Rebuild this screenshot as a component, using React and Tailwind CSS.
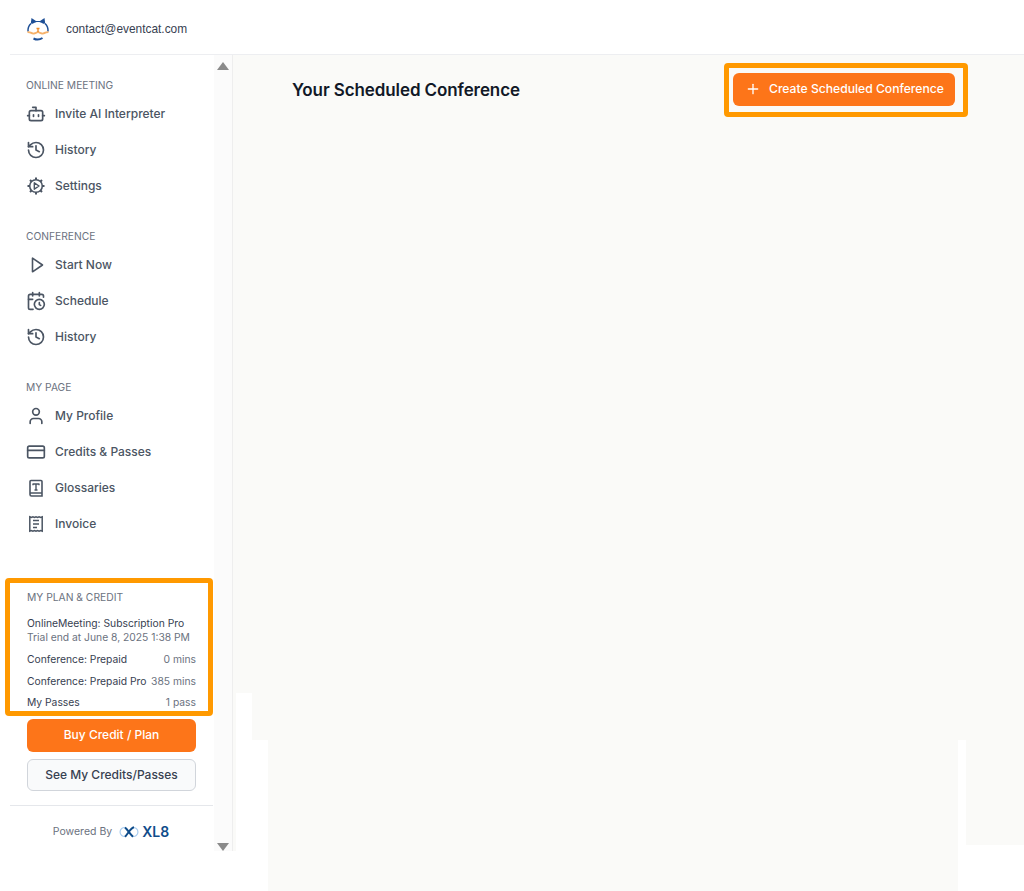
import React from 'react';
import { Bot, History, CalendarClock, User, CreditCard, Plus } from 'lucide-react';

const GearPlayIcon = ({ className }) => (
    <svg viewBox="0 0 20 20" fill="none" stroke="currentColor" strokeWidth="1.600" className={className}>
        <circle cx="10" cy="10" r="6.300" />
        <path d="M10 1.500v2.200M10 16.300v2.200M1.500 10h2.200M16.300 10h2.200M4 4l1.500 1.500M14.500 14.500 16 16M16 4l-1.500 1.500M5.500 14.500 4 16" strokeWidth="2" />
        <path d="M8.300 6.800v6.400l4.700-3.200z" strokeWidth="1.400" strokeLinejoin="round" />
    </svg>
);

const PlayIcon = ({ className }) => (
    <svg viewBox="0 0 20 20" fill="none" stroke="currentColor" strokeWidth="1.600" strokeLinejoin="round" className={className}>
        <path d="M6.500 3.200v13.600L16.500 10z" />
    </svg>
);

const BookTIcon = ({ className }) => (
    <svg viewBox="0 0 20 20" fill="none" stroke="currentColor" strokeWidth="1.600" className={className}>
        <path d="M4 15V3.500a1 1 0 0 1 1-1h10a1 1 0 0 1 1 1v14.500H5.500A1.500 1.500 0 0 1 4 16.500V15Zm0 0h12" />
        <path d="M7 6h6M10 6v6M7 5.500v1.800M13 5.500v1.800M8.500 12h3" strokeWidth="1.400" />
    </svg>
);

const InvoiceIcon = ({ className }) => (
    <svg viewBox="0 0 20 20" fill="none" stroke="currentColor" strokeWidth="1.500" className={className}>
        <path d="M3.800 2.800l1.550.6 1.550-.6 1.550.6 1.550-.6 1.550.6 1.550-.6 1.550.6 1.550-.6v14.400l-1.550-.6-1.550.6-1.550-.6-1.550.6-1.550-.6-1.550.6-1.550-.6-1.550.6z" />
        <path d="M7 6.500h6M7 10h6M7 13.500h4" />
    </svg>
);

const CatLogo = () => (
    <svg viewBox="0 0 24 24" fill="none" className="h-6 w-6">
        <path d="M4.800 6.500 5.500 1l4.500 3h4l4.500-3 .7 5.500-2 .2c-3-2.200-7.400-2.200-10.400 0z" fill="#1e4f96" />
        <path d="M2 14.500A10 10 0 0 1 5 6.500M19 6.500a10 10 0 0 1 3 8" stroke="#1e4f96" strokeWidth="1.500" />
        <path d="M1.500 15.500c2-1.800 3.500 1.500 6.500 1 2.500-.4 3-1.500 4-1.500s1.500 1.100 4 1.500c3 .5 4.500-2.800 6.500-1" stroke="#f6b26b" strokeWidth="1.800" />
        <path d="M10.500 11.500h3M12 11.500v3.500" stroke="#f08a24" strokeWidth="1.300" />
        <path d="M7.500 21.500c3 1.500 6 1.500 9-.5" stroke="#1e4f96" strokeWidth="2" />
    </svg>
);

const Xl8Logo = () => (
    <svg viewBox="0 0 20 12" fill="none" className="h-3 w-5">
        <path d="M6.500 1.600A4.500 4.500 0 1 0 6.500 10.400" stroke="#a9cdf0" strokeWidth="1.200" />
        <path d="M13.500 1.600A4.500 4.500 0 1 1 13.500 10.400" stroke="#a9cdf0" strokeWidth="1.200" />
        <path d="M6 1.500c2.500 2 4.500 6 8 9.300M15 1.300c-3.500.7-5.500 5.700-9 9.500" stroke="#0f4c8a" strokeWidth="2" />
    </svg>
);

const sections = [
    {
        title: 'ONLINE MEETING',
        items: [
            { label: 'Invite AI Interpreter', icon: Bot },
            { label: 'History', icon: History },
            { label: 'Settings', icon: GearPlayIcon },
        ],
    },
    {
        title: 'CONFERENCE',
        items: [
            { label: 'Start Now', icon: PlayIcon },
            { label: 'Schedule', icon: CalendarClock },
            { label: 'History', icon: History },
        ],
    },
    {
        title: 'MY PAGE',
        items: [
            { label: 'My Profile', icon: User },
            { label: 'Credits & Passes', icon: CreditCard },
            { label: 'Glossaries', icon: BookTIcon },
            { label: 'Invoice', icon: InvoiceIcon },
        ],
    },
];

const planRows = [
    { label: 'Conference: Prepaid', value: '0 mins' },
    { label: 'Conference: Prepaid Pro', value: '385 mins' },
    { label: 'My Passes', value: '1 pass' },
];

const App = () => {
    return (
        <div className="relative h-[891px] w-[1024px] overflow-hidden bg-white font-['Inter',sans-serif]">
            <header className="ml-2.5 flex h-[55px] items-center border-b border-gray-200/70 pl-4 pt-1">
                <CatLogo />
                <span className="ml-[16px] mt-[2px] font-['Liberation_Sans',sans-serif] text-[11.900px] text-[#374151]">contact@eventcat.com</span>
            </header>

            <div className="flex h-[836px]">
                <aside className="flex h-[796px] w-[233px] shrink-0 border-r border-[#eeeeee]">
                    <div className="flex w-[204px] shrink-0 flex-col">
                        <nav className="flex flex-col gap-[26px] pl-[26px] pt-6">
                            {sections.map(section => (
                                <div key={section.title}>
                                    <div className="text-[10.250px] leading-3 text-[#6b7280]">{section.title}</div>
                                    <ul className="mt-[5px] flex flex-col">
                                        {section.items.map(item => (
                                            <li key={section.title + item.label} className="flex h-9 items-center text-xs font-medium text-[#4b5563]">
                                                <item.icon className="h-5 w-5 shrink-0 text-[#4b5563]" />
                                                <span className="ml-[9px]">{item.label}</span>
                                            </li>
                                        ))}
                                    </ul>
                                </div>
                            ))}
                        </nav>

                        <div className="ml-[5px] mt-[36px] h-[138px] w-[208px] shrink-0 rounded-sm border-[5px] border-[#ff9900] pl-[17px] pr-[12px] pt-[6px] text-[10.300px]">
                            <div className="leading-4 text-[#6b7280]">MY PLAN &amp; CREDIT</div>
                            <div className="mt-[11px] leading-[14px] text-[#374151]">OnlineMeeting: Subscription Pro</div>
                            <div className="leading-[14px] text-[#6b7280]">Trial end at June 8, 2025 1:38 PM</div>
                            <div className="mt-[5px] flex flex-col">
                                {planRows.map(row => (
                                    <div key={row.label} className="flex h-[21.500px] items-center justify-between text-[#374151]">
                                        <span>{row.label}</span>
                                        <span className="text-[#6b7280]">{row.value}</span>
                                    </div>
                                ))}
                            </div>
                        </div>

                        <div className="ml-[27px] mt-[3px] flex w-[169px] flex-col gap-[7px]">
                            <button className="h-[33px] rounded-md bg-[#fd7519] pb-px text-xs font-medium text-white">Buy Credit / Plan</button>
                            <button className="h-[32px] rounded-md border border-[#d1d5db] bg-[#f9fafb] text-xs font-medium text-[#374151]">See My Credits/Passes</button>
                        </div>

                        <div className="ml-2.5 mt-[14px] flex w-[203px] items-center justify-center border-t border-[#e5e7eb] pr-px pt-[18px]">
                            <span className="mr-[7px] text-[10.500px] text-[#6b7280]">Powered By</span>
                            <Xl8Logo />
                            <span className="ml-[3px] text-sm font-semibold leading-4 text-[#0f4c8a]">XL8</span>
                        </div>
                    </div>

                    <div className="ml-[10px] flex w-[18px] flex-col items-center justify-between bg-[#fbfbfb] pt-[7px]">
                        <span className="h-0 w-0 border-x-[6px] border-b-[8px] border-x-transparent border-b-[#8a8a8a]" />
                        <span className="h-0 w-0 border-x-[6px] border-t-[8px] border-x-transparent border-t-[#8a8a8a]" />
                    </div>
                </aside>

                <main className="flex h-[836px] flex-1 items-start justify-between bg-[#fafaf8] pl-[59px] pr-[56px] pt-[8px]">
                    <h1 className="mt-[17px] text-[17px] font-semibold leading-[20px] tracking-[-0.1px] text-[#111827]">Your Scheduled Conference</h1>
                    <div className="rounded-sm border-[5px] border-[#ff9900] pb-[6px] pl-1 pr-2 pt-[5px]">
                        <button className="flex h-[33px] w-[222px] items-center justify-start gap-2 rounded-md bg-[#fd7519] pb-px pl-3 text-[12.150px] font-medium text-white">
                            <Plus className="h-4 w-4" />
                            Create Scheduled Conference
                        </button>
                    </div>
                </main>
            </div>

            {/* white patches over the background, left by the capture */}
            <div className="absolute left-[236px] top-[693px] h-[198px] w-4 bg-white" />
            <div className="absolute left-0 top-[851px] h-10 w-[268px] bg-white" />
            <div className="absolute left-[252px] top-[740px] h-[151px] w-4 bg-white" />
            <div className="absolute left-[958px] top-[740px] h-[151px] w-2 bg-white" />
            <div className="absolute left-[958px] top-[845px] h-[46px] w-[66px] bg-white" />
        </div>
    );
};

export default App;
